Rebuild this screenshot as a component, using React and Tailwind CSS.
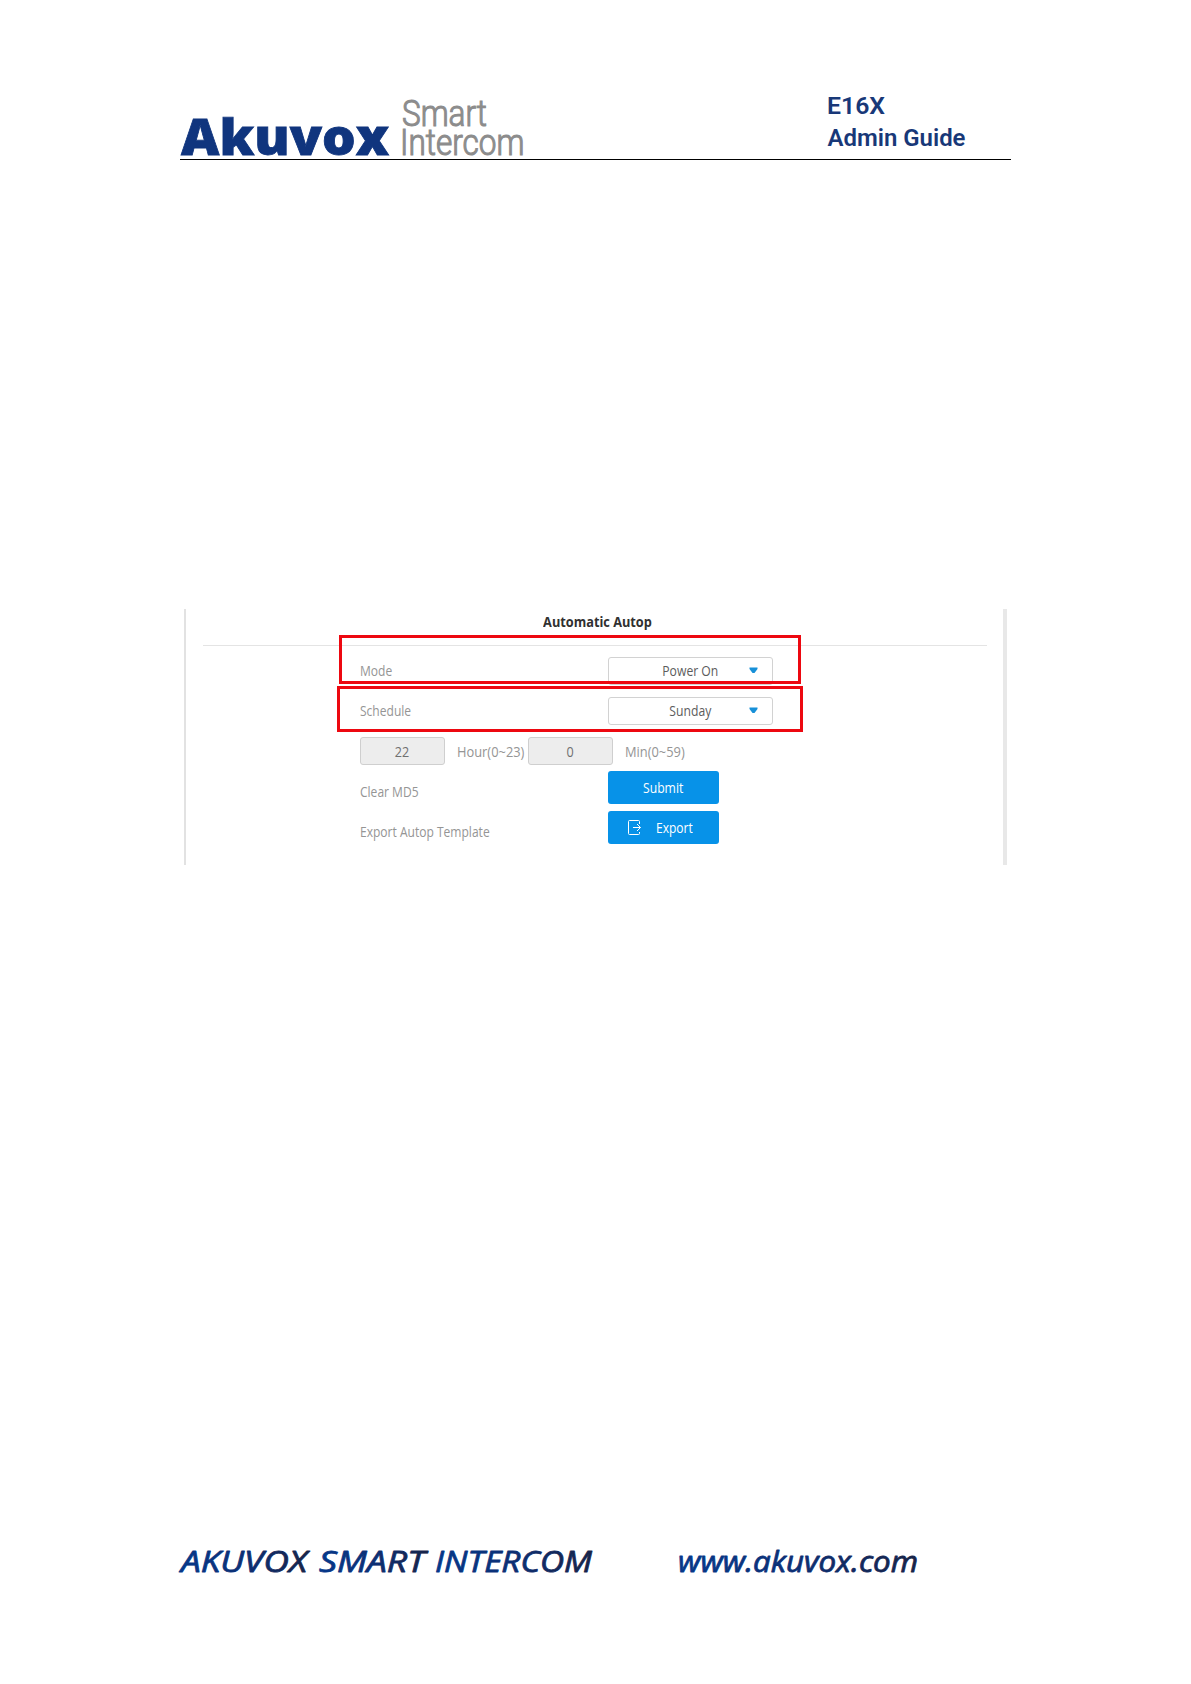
import React from 'react';

const Logo = () => (
  <svg width="346" height="62" viewBox="0 0 346 62" className="block overflow-visible">
    <text x="1" y="58" textLength="208" lengthAdjust="spacingAndGlyphs" className="fill-[#10357e] stroke-[#10357e] stroke-[0.8] font-['Open_Sans',sans-serif] text-[50px] font-extrabold">
      Akuvox
    </text>
    <text x="222" y="28.5" textLength="85" lengthAdjust="spacingAndGlyphs" className="fill-[#8c8c8c] stroke-[#8c8c8c] stroke-[1.1] font-[Roboto,sans-serif] text-[36px] font-light">
      Smart
    </text>
    <text x="220" y="58" textLength="124.5" lengthAdjust="spacingAndGlyphs" className="fill-[#8c8c8c] stroke-[#8c8c8c] stroke-[1.1] font-[Roboto,sans-serif] text-[36px] font-light">
      Intercom
    </text>
  </svg>
);

const footerWords = [
  { text: 'AKUVOX', x: 1, width: 126 },
  { text: 'SMART', x: 139, width: 106 },
  { text: 'INTERCOM', x: 255, width: 157 },
  { text: 'www.akuvox.com', x: 498, width: 240 },
];

const Footer = () => (
  <footer>
    <svg width="760" height="44" viewBox="0 0 760 44" className="block overflow-visible">
      <defs>
        <linearGradient id="ink">
          <stop offset="0" stopColor="#05388a" />
          <stop offset="0.5" stopColor="#0c2f74" />
          <stop offset="1" stopColor="#172347" />
        </linearGradient>
      </defs>
      {footerWords.map((word) => (
        <text
          key={word.text}
          x={word.x}
          y="32"
          textLength={word.width}
          lengthAdjust="spacingAndGlyphs"
          fill="url(#ink)"
          stroke="url(#ink)"
          strokeWidth="0.8"
          strokeLinejoin="round"
          className="font-['Open_Sans',sans-serif] text-[29px] italic"
        >
          {word.text}
        </text>
      ))}
    </svg>
  </footer>
);

const Label = ({ children }) => (
  <span className="inline-block origin-left scale-x-[0.86] whitespace-nowrap">{children}</span>
);

const Select = ({ value }) => (
  <div className="flex h-7 w-[165px] items-center rounded-[3px] border border-[#d2d2d2] bg-white pr-[14px] pb-px text-[#5c5c5c]">
    <span className="flex-1 scale-x-[0.87] pl-[26px] text-center">{value}</span>
    <svg width="9" height="7" viewBox="0 0 9 7">
      <path d="M0.5 0.5H8.5V2L5.5 6H3.5L0.5 2Z" fill="#1790d8" />
    </svg>
  </div>
);

const NumberBox = ({ value }) => (
  <div className="flex h-7 w-[85px] items-center justify-center rounded-[3px] border border-[#cfcfcf] bg-[#ededed] text-[#707070]">
    <span className="scale-x-[0.9]">{value}</span>
  </div>
);

const ExportIcon = () => (
  <svg width="14" height="16" viewBox="0 0 14 16" fill="none" stroke="white" strokeWidth="1">
    <path d="M11.5 4V1.5Q11.5 0.5 10.5 0.5H1.5Q0.5 0.5 0.5 1.5V13.5Q0.5 14.5 1.5 14.5H10.5Q11.5 14.5 11.5 13.5V12" />
    <path d="M5 7.5H12.5M9 4L12.5 7.5L9 11" />
  </svg>
);

const App = () => {
  return (
    <div className="flex h-[1684px] w-[1191px] flex-col bg-white pl-[180px] font-['Open_Sans','Noto_Sans',sans-serif] text-[14px]">
      <header className="mt-[97px] flex h-[63px] w-[831px] justify-between border-b border-black">
        <Logo />
        <svg width="183" height="60" viewBox="0 0 183 60" className="overflow-visible fill-[#183878] font-[Roboto,sans-serif] text-[24px] font-semibold">
          <text x="-1" y="17" textLength="58" lengthAdjust="spacingAndGlyphs">E16X</text>
          <text x="-0.5" y="48.5" textLength="138" lengthAdjust="spacingAndGlyphs">Admin Guide</text>
        </svg>
      </header>

      <main className="relative mt-[449px] ml-1 h-[256px] w-[823px] border-r-4 border-l-2 border-r-[#e8e8e8] border-l-[#e2e2e2]">
        <h1 className="ml-[17px] flex h-9 w-[784px] items-center justify-center pb-[11px] font-bold text-[#303030]">
          <span className="scale-x-[0.91] pl-[6px]">Automatic Autop</span>
        </h1>
        <hr className="ml-[17px] w-[784px] border-[#e4e4e4]" />

        <section className="ml-[174px] text-[#959595]">
          <div className="flex h-[39px] items-start overflow-hidden pt-[11px]">
            <span className="w-[248px] leading-7"><Label>Mode</Label></span>
            <Select value="Power On" />
          </div>
          <div className="mt-3 flex">
            <span className="w-[248px] leading-7"><Label>Schedule</Label></span>
            <Select value="Sunday" />
          </div>
          <div className="mt-3 flex items-center">
            <NumberBox value="22" />
            <span className="w-[83px] origin-left scale-x-[0.92] pl-[13px]">Hour(0~23)</span>
            <NumberBox value="0" />
            <span className="origin-left scale-x-[0.92] pl-[13px]">Min(0~59)</span>
          </div>
          <div className="mt-[6px] flex h-[35px]">
            <span className="w-[248px] pt-[7px] leading-7"><Label>Clear MD5</Label></span>
            <button className="h-[33px] w-[111px] rounded-[3px] bg-[#0792e8] text-white">
              <span className="inline-block scale-x-[0.87]">Submit</span>
            </button>
          </div>
          <div className="mt-[5px] flex">
            <span className="w-[248px] pt-[7px] leading-7"><Label>Export Autop Template</Label></span>
            <button className="flex h-[33px] w-[111px] items-center rounded-[3px] bg-[#0792e8] pl-5 text-white">
              <ExportIcon />
              <span className="ml-[14px] origin-left scale-x-[0.86]">Export</span>
            </button>
          </div>
        </section>

        {/* Highlight frames over the two rows */}
        <div className="absolute top-[26px] left-[153px] h-[49px] w-[462px] border-[3px] border-[#ed0810]"></div>
        <div className="absolute top-[77px] left-[151px] h-[46px] w-[466px] border-[3px] border-[#ed0810]"></div>
      </main>

      <div className="mt-[675px]">
        <Footer />
      </div>
    </div>
  );
};

export default App;
